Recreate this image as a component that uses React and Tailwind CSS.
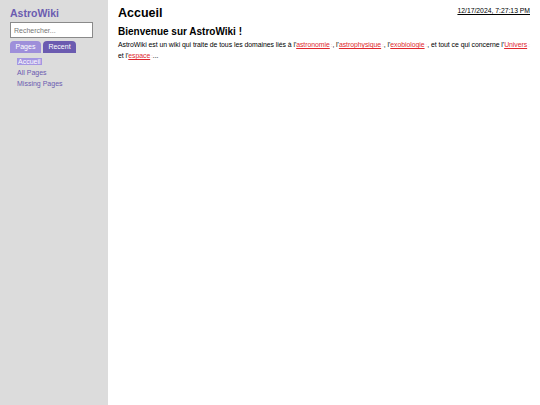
import React from 'react';

const Missing = ({ children }) => (
  <span className="whitespace-nowrap">
    <a href="#" className="text-[#e0282e] underline">{children}</a>
    <span className="text-[#f3a6a6] text-[6px] leading-none ml-[1px]">:</span>
  </span>
);

export default function App() {
  return (
    <div className="flex w-[540px] h-[405px] font-['Liberation_Sans',Arial,sans-serif] text-black">
      <aside className="w-[108px] shrink-0 bg-[#dcdcdc] pl-[10px] pr-[15px] pt-[5px]">
        <div className="text-[10.5px] font-bold text-[#6b5bb0] leading-[16px]">AstroWiki</div>
        <input
          className="mt-[1px] block w-[83px] h-[16px] bg-white border border-[#8a8a8a] text-[7px] px-[3px] outline-none placeholder:text-[#777]"
          placeholder="Rechercher..."
        />
        <div className="flex gap-[2px] mt-[3px]">
          <button className="w-[31px] h-[12px] bg-[#9e8fda] text-white text-[7px] leading-[12px] rounded-t-[4px]">Pages</button>
          <button className="w-[33px] h-[12px] bg-[#6b5bb0] text-white text-[7px] leading-[12px] rounded-t-[4px]">Recent</button>
        </div>
        <ul className="mt-[3px] pl-[7px] text-[7px] leading-[11px] text-[#6b5bb0]">
          <li><span className="bg-[#a597e2] text-white px-[1px]">Accueil</span></li>
          <li>All Pages</li>
          <li>Missing Pages</li>
        </ul>
      </aside>
      <main className="flex-1 bg-white pl-[10px] pr-[6px] pt-[4px]">
        <div className="flex justify-between items-start">
          <h1 className="text-[12.5px] font-bold leading-[18px]">Accueil</h1>
          <span className="text-[6.8px] underline mt-[2px] mr-[4px]">12/17/2024, 7:27:13 PM</span>
        </div>
        <h2 className="text-[10px] font-bold leading-[14px] mt-[3px]">Bienvenue sur AstroWiki !</h2>
        <p className="text-[6.9px] leading-[11px] mt-[0px] tracking-[-0.05px]">
          AstroWiki est un wiki qui traite de tous les domaines liés à l'<Missing>astronomie</Missing>, l'<Missing>astrophysique</Missing>, l'<Missing>exobiologie</Missing>, et tout ce qui concerne l'<Missing>Univers</Missing> et l'<Missing>espace</Missing>...
        </p>
      </main>
    </div>
  );
}
